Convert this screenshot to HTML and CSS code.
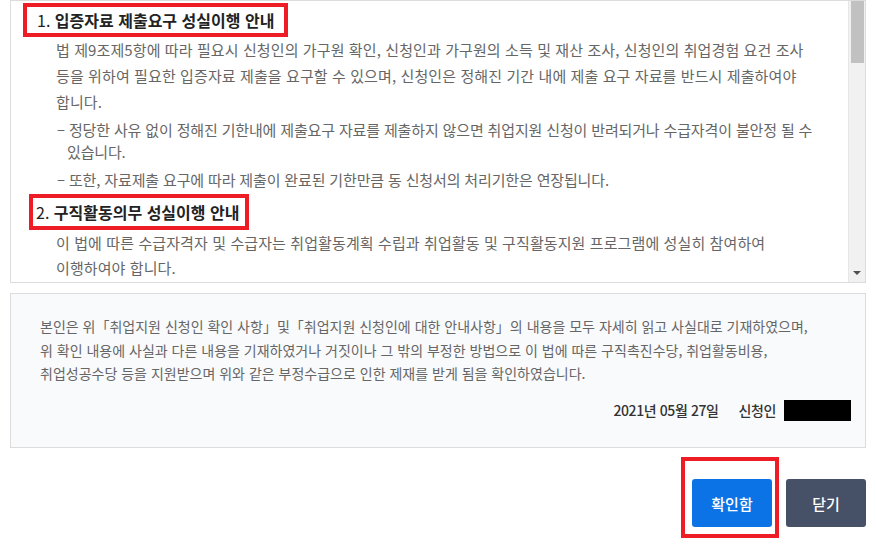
FILE: index.html
```html
<!DOCTYPE html>
<html lang="ko">
<head>
    <meta charset="UTF-8">
    <meta name="viewport" content="width=device-width, initial-scale=1.0">
    <title>취업지원 신청 확인</title>
    <link rel="stylesheet" href="styles.css">
</head>
<body>
    <div class="terms-box">
        <div class="terms-content">
            <h3 class="terms-title"><span class="mark">1. <b>입증자료 제출요구 성실이행 안내</b></span></h3>
            <p class="terms-text">
                법 제9조제5항에 따라 필요시 신청인의 가구원 확인, 신청인과 가구원의 소득 및 재산 조사, 신청인의 취업경험 요건 조사<br>
                등을 위하여 필요한 입증자료 제출을 요구할 수 있으며, 신청인은 정해진 기간 내에 제출 요구 자료를 반드시 제출하여야<br>
                합니다.
            </p>
            <ul class="terms-list">
                <li>– 정당한 사유 없이 정해진 기한내에 제출요구 자료를 제출하지 않으면 취업지원 신청이 반려되거나 수급자격이 불안정 될 수<br>있습니다.</li>
                <li>– 또한, 자료제출 요구에 따라 제출이 완료된 기한만큼 동 신청서의 처리기한은 연장됩니다.</li>
            </ul>
            <h3 class="terms-title"><span class="mark mark-second">2. <b>구직활동의무 성실이행 안내</b></span></h3>
            <p class="terms-text tight">
                이 법에 따른 수급자격자 및 수급자는 취업활동계획 수립과 취업활동 및 구직활동지원 프로그램에 성실히 참여하여<br>
                이행하여야 합니다.
            </p>
        </div>
        <div class="scrollbar">
            <div class="scroll-thumb"></div>
            <div class="scroll-arrow"></div>
        </div>
    </div>

    <div class="agree-box">
        <p class="agree-text">
            본인은 위「취업지원 신청인 확인 사항」및「취업지원 신청인에 대한 안내사항」의 내용을 모두 자세히 읽고 사실대로 기재하였으며,<br>
            위 확인 내용에 사실과 다른 내용을 기재하였거나 거짓이나 그 밖의 부정한 방법으로 이 법에 따른 구직촉진수당, 취업활동비용,<br>
            취업성공수당 등을 지원받으며 위와 같은 부정수급으로 인한 제재를 받게 됨을 확인하였습니다.
        </p>
        <div class="sign-row">
            <span>2021년 05월 27일</span>
            <span class="sign-label">신청인</span>
            <span class="sign-name"></span>
        </div>
    </div>

    <div class="btn-area">
        <span class="btn-mark"><button class="btn btn-primary">확인함</button></span>
        <button class="btn btn-dark">닫기</button>
    </div>
</body>
</html>
```

FILE: styles.css
```css
* {
    margin: 0;
    padding: 0;
    box-sizing: border-box;
}

body {
    font-family: "Noto Sans CJK KR", "Noto Sans", sans-serif;
    background: #fff;
    color: #666;
    width: 876px;
    height: 547px;
    overflow: hidden;
}

.terms-box {
    display: flex;
    margin: 0 10px;
    height: 283px;
    border: 1px solid #dcdcdc;
    overflow: hidden;
}

.terms-content {
    flex: 1;
    padding: 2px 0 0 12px;
    overflow: hidden;
}

.terms-title {
    display: flex;
    font-size: 16px;
    font-weight: 400;
    color: #222;
}

.terms-title b {
    font-weight: 700;
}

.mark {
    display: inline-block;
    border: 4px solid #ee1c24;
    padding: 0 10px;
    line-height: 26px;
}

.mark-second {
    margin: 3px 0 0 6px;
    padding: 0 6px 0 3px;
    line-height: 28px;
}

.terms-text {
    font-size: 15px;
    line-height: 26px;
    letter-spacing: 0.1px;
    padding-left: 33px;
}

.terms-text.tight {
    line-height: 25px;
}

.terms-list {
    list-style: none;
    padding-left: 34px;
    margin-top: 4px;
}

.terms-list li {
    font-size: 15px;
    line-height: 22px;
    letter-spacing: -0.15px;
    padding-left: 10px;
    text-indent: -10px;
}

.terms-list li + li {
    margin-top: 6px;
}

.scrollbar {
    width: 17px;
    background: #f1f1f1;
    border-left: 1px solid #e6e6e6;
    display: flex;
    flex-direction: column;
    justify-content: space-between;
    align-items: center;
}

.scroll-thumb {
    width: 13px;
    height: 62px;
    background: #c1c1c1;
}

.scroll-arrow {
    width: 0;
    height: 0;
    border-left: 4px solid transparent;
    border-right: 4px solid transparent;
    border-top: 4px solid #505050;
    margin-bottom: 7px;
}

.agree-box {
    margin: 10px 10px 0;
    height: 155px;
    background: #f9fafc;
    border: 1px solid #dcdcdc;
    padding: 21px 14px 0 29px;
}

.agree-text {
    font-size: 14px;
    line-height: 23.5px;
}

.sign-row {
    display: flex;
    justify-content: flex-end;
    align-items: center;
    margin-top: 14px;
    font-size: 14px;
    font-weight: 500;
    color: #333;
    letter-spacing: -0.4px;
}

.sign-label {
    margin-left: 20px;
}

.sign-name {
    width: 67px;
    height: 21px;
    background: #000;
    margin-left: 8px;
}

.btn-area {
    display: flex;
    justify-content: flex-end;
    gap: 14px;
    margin: 31px 10px 0;
}

.btn-mark {
    position: relative;
    display: inline-flex;
}

.btn-mark::after {
    content: "";
    position: absolute;
    top: -22px;
    right: -7px;
    bottom: -11px;
    left: -11px;
    border: 4px solid #ee1c24;
}

.btn {
    width: 80px;
    height: 48px;
    border: none;
    border-radius: 3px;
    font-family: inherit;
    font-size: 15px;
    font-weight: 500;
    color: #fff;
    cursor: pointer;
}

.btn-primary {
    background: #0b73e5;
}

.btn-dark {
    background: #465066;
}
```
